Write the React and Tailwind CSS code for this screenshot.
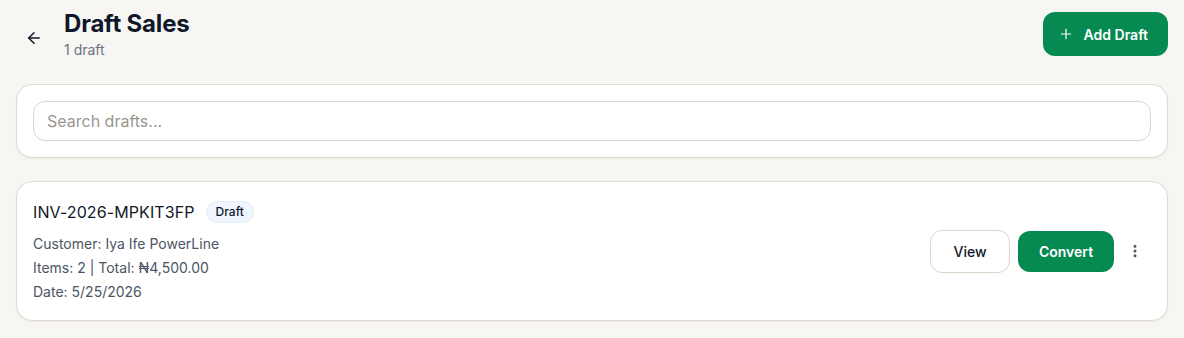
import React from 'react';
import { ArrowLeft, Plus, MoreVertical } from 'lucide-react';

const drafts = [
  {
    id: 'INV-2026-MPKIT3FP',
    customer: 'Iya Ife PowerLine',
    items: 2,
    total: '₦4,500.00',
    date: '5/25/2026',
  },
];

export default function App() {
  return (
    <div className="min-h-screen bg-[#f7f6f2] px-4 pt-3 pb-4 text-[#111827]" style={{ fontFamily: 'Inter, "Noto Sans", sans-serif' }}>
      {/* header */}
      <div className="flex items-start justify-between">
        <div className="flex items-start">
          <button className="mt-[14px] ml-[6px] mr-[18px] flex h-6 w-6 items-center justify-center text-[#111827]">
            <ArrowLeft size={18} strokeWidth={2} />
          </button>
          <div>
            <h1 className="text-[24px] font-bold leading-[24px] tracking-[-0.2px] text-[#0f172a]">Draft Sales</h1>
            <p className="mt-[6px] text-[14px] leading-4 text-[#6b7280]">1 draft</p>
          </div>
        </div>
        <button className="flex h-[44px] items-center gap-[10px] rounded-xl bg-[#078a52] pl-[15px] pr-[20px] text-[14px] font-semibold text-white">
          <Plus size={16} strokeWidth={1.75} />
          Add Draft
        </button>
      </div>

      {/* search */}
      <div className="mt-[26px] rounded-2xl border border-[#e0dbd0] bg-white p-4 shadow-[0_1px_2px_rgba(0,0,0,0.06)]">
        <input
          type="text"
          placeholder="Search drafts..."
          className="h-10 w-full rounded-xl border border-[#ddd6c8] bg-white px-[13px] text-[16px] text-[#111827] outline-none placeholder:text-[#9a968d]"
        />
      </div>

      {/* list */}
      <div className="mt-[23px] flex flex-col gap-4">
        {drafts.map((d) => (
          <div key={d.id} className="flex items-center justify-between rounded-2xl border border-[#e0dbd0] bg-white p-4 shadow-[0_1px_2px_rgba(0,0,0,0.06)]">
            <div>
              <div className="flex h-7 items-center gap-[11px]">
                <span className="text-[16px] font-normal tracking-[0.1px] text-[#111827]">{d.id}</span>
                <span className="flex h-[22px] items-center rounded-full border border-[#e5edf7] bg-[#eff6ff] px-[9px] text-[12px] font-medium text-[#111827]">Draft</span>
              </div>
              <div className="mt-[6px] flex flex-col text-[14px] leading-6 text-[#4b5563]">
                <span>Customer: {d.customer}</span>
                <span>Items: {d.items} | Total: {d.total}</span>
                <span>Date: {d.date}</span>
              </div>
            </div>
            <div className="flex items-center">
              <button className="h-[43px] w-[80px] rounded-xl border border-[#ddd6c8] bg-white text-[14px] font-medium text-[#111827]">View</button>
              <button className="ml-[8px] h-[41px] w-[96px] rounded-xl bg-[#078a52] text-[14px] font-semibold text-white">Convert</button>
              <button className="ml-[5px] flex h-8 w-8 items-center justify-center text-[#4b5563]">
                <MoreVertical size={16} strokeWidth={2.5} />
              </button>
            </div>
          </div>
        ))}
      </div>
    </div>
  );
}
